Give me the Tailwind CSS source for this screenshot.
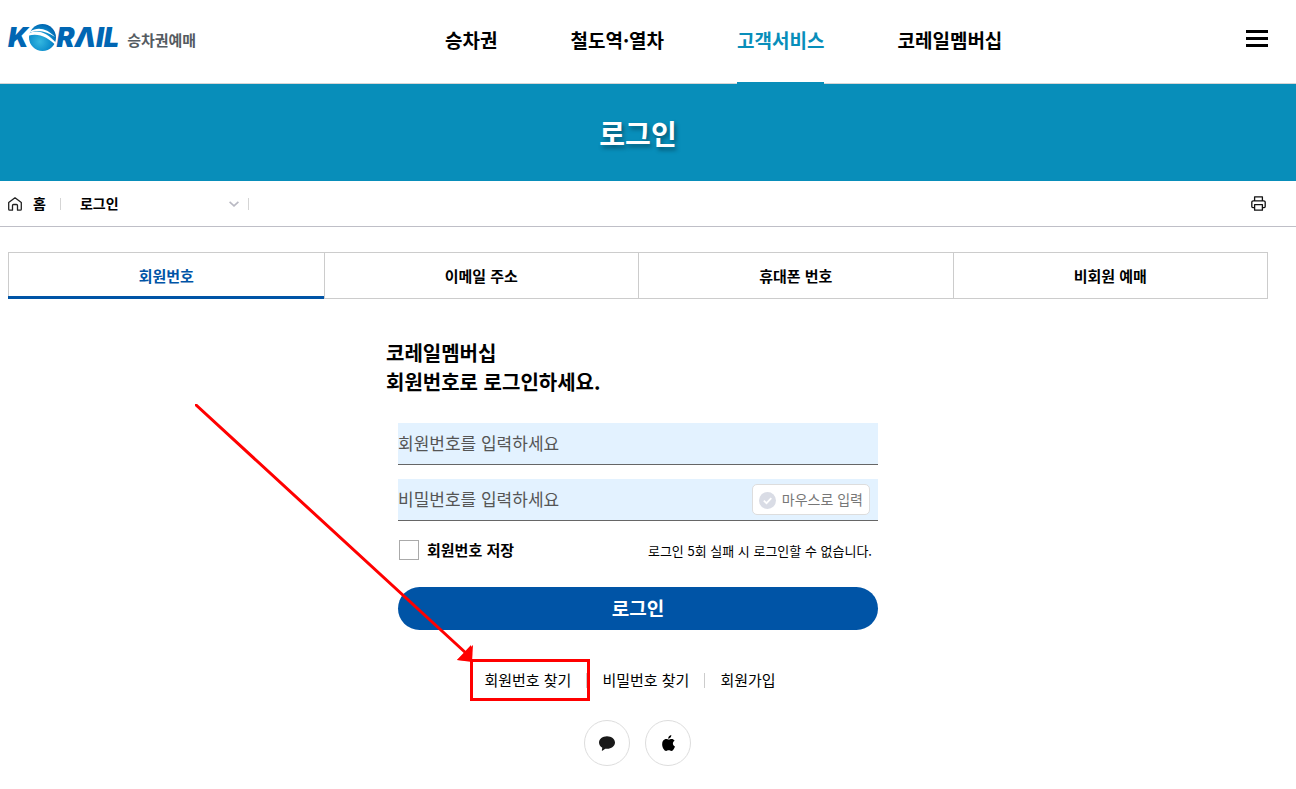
<!DOCTYPE html>
<html lang="ko">
  <head>
    <meta charset="UTF-8" />
    <meta name="viewport" content="width=device-width, initial-scale=1.0" />
    <title>로그인 | 코레일 승차권예매</title>
    <script src="https://cdn.jsdelivr.net/npm/@tailwindcss/browser@4"></script>
  </head>
  <body class="bg-white text-black overflow-x-hidden font-['Noto_Sans_CJK_KR',sans-serif]">

    <!-- Header -->
    <header class="flex h-[84px] items-stretch border-b border-[#d5d5d5] pl-2 pr-7">
      <a href="#" aria-label="KORAIL 승차권예매" class="flex w-[437px] shrink-0 items-center pb-2">
        <span class="font-['Inter',sans-serif] text-[27px] leading-7 font-black italic text-[#0066b3]">K</span>
        <svg class="h-7 w-7 shrink-0" viewBox="0 0 28 28">
          <defs>
            <radialGradient id="globe" cx="0.4" cy="0.65" r="0.65">
              <stop offset="0" stop-color="#35b8e0" />
              <stop offset="0.6" stop-color="#0f90cd" />
              <stop offset="1" stop-color="#0067b2" />
            </radialGradient>
          </defs>
          <circle cx="13.500" cy="13.500" r="13.5" fill="url(#globe)" />
          <path d="M0 9.500C8 5 18 8 28 20V22.500C19 13 10 9 0 11.500Z" fill="#fff" />
          <path d="M1 7.500C9 2.500 18 4.500 26 13C18 7.500 10 5 1 8.500Z" fill="#fff" />
        </svg>
        <span class="font-['Inter',sans-serif] text-[27px] leading-7 font-black italic text-[#0066b3]">RΛIL</span>
        <span class="ml-2 pt-1 text-[15px] leading-5 font-bold text-[#555b61]">승차권예매</span>
      </a>
      <nav class="flex flex-1 gap-[73px] text-[19px] font-bold">
        <a href="#" class="flex items-center pb-[2px]">승차권</a>
        <a href="#" class="flex items-center pb-[2px]">철도역·열차</a>
        <a href="#" class="relative flex items-center pb-[2px] text-[#088eba]">
          고객서비스
          <span class="absolute inset-x-0 -bottom-px h-[2px] bg-[#088eba]"></span>
        </a>
        <a href="#" class="flex items-center pb-[2px]">코레일멤버십</a>
      </nav>
      <button type="button" aria-label="전체메뉴" class="flex flex-col justify-center gap-1 pb-[6px]">
        <span class="h-[3px] w-[22px] bg-black"></span>
        <span class="h-[3px] w-[22px] bg-black"></span>
        <span class="h-[3px] w-[22px] bg-black"></span>
      </button>
    </header>

    <!-- Page title -->
    <div class="flex h-[97px] items-center justify-center bg-[#088eba] pr-5">
      <h1 class="text-[28px] font-bold text-white text-shadow-[2px_3px_4px_rgb(0_0_0/0.4)]">로그인</h1>
    </div>

    <!-- Breadcrumb -->
    <div class="flex h-[46px] items-center border-b border-[#bfbfc7] pl-2 pr-[30px] text-[14px] font-bold">
      <a href="#" class="flex items-center gap-[11px]">
        <svg class="h-[14px] w-[14px]" viewBox="0 0 14 14" fill="none" stroke="#222" stroke-width="1.3" stroke-linejoin="round">
          <path d="M.7 5.6L7 .8l6.300 4.800V12.200a1 1 0 0 1-1 1H9.500V8.500a1 1 0 0 0-1-1h-3a1 1 0 0 0-1 1v4.700H1.700a1 1 0 0 1-1-1z" />
        </svg>
        홈
      </a>
      <span class="ml-[14px] h-3 w-px bg-[#d5d5d5]"></span>
      <button type="button" class="flex w-[187px] items-center justify-between pl-[19px] pr-[9px]">
        로그인
        <svg class="h-[6px] w-[10px]" viewBox="0 0 10 6" fill="none" stroke="#b9b9c3" stroke-width="1.600"><path d="M.6.8L5 4.800L9.400.8" /></svg>
      </button>
      <span class="h-3 w-px bg-[#d5d5d5]"></span>
      <button type="button" aria-label="인쇄" class="ml-auto">
        <svg class="h-[15px] w-[15px]" viewBox="0 0 15 15" fill="none" stroke="#111" stroke-width="1.3" stroke-linejoin="round">
          <path d="M3.600 4.800V.8h7.800v4M3.600 11.600H1.900a1.100 1.100 0 0 1-1.100-1.100V6.300a1.500 1.500 0 0 1 1.500-1.500h10.400a1.500 1.500 0 0 1 1.500 1.500v4.200a1.100 1.100 0 0 1-1.100 1.100h-1.700M3.600 8.700h7.800v5.500H3.600z" />
        </svg>
      </button>
    </div>

    <main class="pl-2 pr-7 pt-[25px]">
      <!-- Login type tabs -->
      <div role="tablist" class="grid h-[47px] grid-cols-4 border border-[#ccc] text-[15px] font-bold">
        <button type="button" role="tab" aria-selected="true" class="relative pt-[2px] text-[#0054a6]">
          회원번호
          <span class="absolute -bottom-px -left-px right-0 h-[3px] bg-[#0054a6]"></span>
        </button>
        <button type="button" role="tab" class="border-l border-[#ccc] pt-[2px]">이메일 주소</button>
        <button type="button" role="tab" class="border-l border-[#ccc] pt-[2px]">휴대폰 번호</button>
        <button type="button" role="tab" class="border-l border-[#ccc] pt-[2px]">비회원 예매</button>
      </div>

      <!-- Login form -->
      <form class="mx-auto max-w-[504px] pt-[39px]">
        <h2 class="text-[20px] leading-[29px] font-bold">코레일멤버십<br />회원번호로 로그인하세요.</h2>
        <div class="px-3 pt-[27px]">
          <input type="text" aria-label="회원번호" placeholder="회원번호를 입력하세요" class="block h-[42px] w-full border-b border-[#666] bg-[#e3f2ff] pb-[2px] text-[17px] outline-none placeholder:text-[#555]" />
          <div class="mt-[14px] flex h-[42px] items-center border-b border-[#666] bg-[#e3f2ff] pr-2">
            <input type="password" aria-label="비밀번호" placeholder="비밀번호를 입력하세요" class="h-full min-w-0 flex-1 pb-[2px] text-[17px] outline-none placeholder:text-[#555]" />
            <button type="button" class="flex h-[31px] items-center gap-[6px] rounded-[5px] border border-[#ddd] bg-white px-[6px] text-[14px] text-[#777]">
              <svg class="mt-px h-[17px] w-[17px]" viewBox="0 0 17 17">
                <circle cx="8.500" cy="8.500" r="8.500" fill="#d9dce5" />
                <path d="M4.800 8.600l2.700 2.600 4.800-5" fill="none" stroke="#fff" stroke-width="1.800" />
              </svg>
              마우스로 입력
            </button>
          </div>
          <div class="flex items-center justify-between pt-[18px] pr-[6px]">
            <label class="flex items-center gap-2 pl-px text-[15px] leading-[22px] font-bold">
              <input type="checkbox" class="h-5 w-5 appearance-none border border-[#aaa] bg-white checked:bg-[#0054a6]" />
              회원번호 저장
            </label>
            <p class="pt-[2px] text-[13px] leading-[18px]">로그인 5회 실패 시 로그인할 수 없습니다.</p>
          </div>
          <button type="submit" class="mt-[26px] block h-[43px] w-full rounded-full bg-[#0054a6] text-[19px] font-bold text-white">로그인</button>
        </div>

        <div class="mt-[39px] flex items-center justify-center gap-[15px] pr-4 text-[15px] leading-[22px]">
          <a href="#" class="relative">
            회원번호 찾기
            <!-- Highlight box and arrow -->
            <span class="pointer-events-none absolute -top-[10px] -left-[14px] z-10 h-[42px] w-[120px] border-[3px] border-[#ff0000]">
              <svg class="absolute right-full bottom-full h-[258px] w-[278px] max-w-none" viewBox="0 0 278 258">
                <path d="M1 1L272 250" stroke="#ff0000" stroke-width="3" stroke-linecap="round" />
                <path d="M278 241L277 258L262 256Z" fill="#ff0000" />
                <path d="M276 241L277 257L262 256Z" fill="#ff0000" />
              </svg>
            </span>
          </a>
          <span class="h-[15px] w-px bg-[#ccc]"></span>
          <a href="#">비밀번호 찾기</a>
          <span class="h-[15px] w-px bg-[#ccc]"></span>
          <a href="#">회원가입</a>
        </div>

        <div class="mt-[29px] flex justify-center gap-[15px] pr-px">
          <button type="button" aria-label="카카오 로그인" class="flex h-[46px] w-[46px] items-center justify-center rounded-full border border-[#ddd]">
            <svg class="h-[15px] w-4" viewBox="0 0 16 15" fill="#191919">
              <path d="M8 .2c4.400 0 8 2.800 8 6.300s-3.600 6.300-8 6.300c-.6 0-1.100 0-1.700-.1L3.400 14.700c-.3.200-.7 0-.6-.4l.5-2.600C1.300 10.600 0 8.700 0 6.500 0 3 3.600.2 8 .2z" />
            </svg>
          </button>
          <button type="button" aria-label="Apple 로그인" class="flex h-[46px] w-[46px] items-center justify-center rounded-full border border-[#ddd]">
            <svg class="h-4 w-[13px]" viewBox="0 0 13 16" fill="#000">
              <path d="M9.300 0c.1 1-.3 1.900-.8 2.600-.6.700-1.400 1.200-2.300 1.100-.1-.9.3-1.800.8-2.400C7.600.6 8.500.1 9.300 0zM12.600 5.700c-1.100.7-1.700 1.600-1.700 2.800 0 1.400.8 2.500 2.100 3-.3.900-.7 1.700-1.200 2.400-.7 1-1.400 2-2.500 2-1 0-1.400-.6-2.600-.6s-1.600.6-2.600.6c-1 0-1.800-1-2.500-2C-.1 11.400-.4 7.700 1.200 5.600c.8-1.100 1.900-1.600 3-1.600 1.100 0 1.800.6 2.700.6.900 0 1.500-.6 2.800-.6 1.100 0 2.200.6 2.900 1.700z" />
            </svg>
          </button>
        </div>
      </form>
    </main>
  </body>
</html>
